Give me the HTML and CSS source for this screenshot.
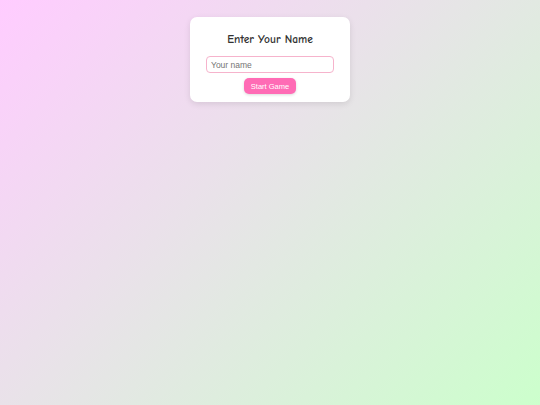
FILE: index.html
```html
<!DOCTYPE html>
<html>
<head>
<meta charset="utf-8">
<link rel="stylesheet" href="styles.css">
</head>
<body>
<div class="card">
  <h1 class="title">Enter Your Name</h1>
  <input class="name-input" type="text" placeholder="Your name">
  <button class="start-btn">Start Game</button>
</div>
</body>
</html>
```
FILE: styles.css
```css
html, body {
  margin: 0;
  padding: 0;
  height: 100%;
}
body {
  background: linear-gradient(135deg, #ffccff, #ccffcc);
  font-family: "Liberation Sans", Arial, sans-serif;
  display: flex;
  justify-content: center;
  align-items: flex-start;
}
.card {
  margin-top: 17px;
  width: 160px;
  box-sizing: border-box;
  padding: 14px 16px 8px;
  background: #fff;
  border-radius: 7px;
  box-shadow: 0 2px 6px rgba(0,0,0,0.1);
  display: flex;
  flex-direction: column;
  align-items: center;
}
.title {
  margin: 0 0 8px;
  font-family: "Comic Sans MS", "Comic Neue", cursive;
  font-size: 11.5px;
  font-weight: bold;
  color: #333;
  line-height: 17px;
}
.name-input {
  width: 128px;
  height: 17px;
  box-sizing: border-box;
  border: 1px solid #f6b3cc;
  border-radius: 4px;
  padding: 0 4px;
  font-family: "Liberation Sans", Arial, sans-serif;
  font-size: 8.5px;
  outline: none;
  margin: 0 0 5px;
}
.name-input::placeholder {
  color: #757575;
}
.start-btn {
  width: 52px;
  height: 16px;
  border: none;
  border-radius: 5px;
  background: #ff6bb5;
  color: #fff;
  font-family: "Liberation Sans", Arial, sans-serif;
  font-size: 7.5px;
  padding: 0;
  box-shadow: 0 1px 3px rgba(0,0,0,0.15);
}
```
